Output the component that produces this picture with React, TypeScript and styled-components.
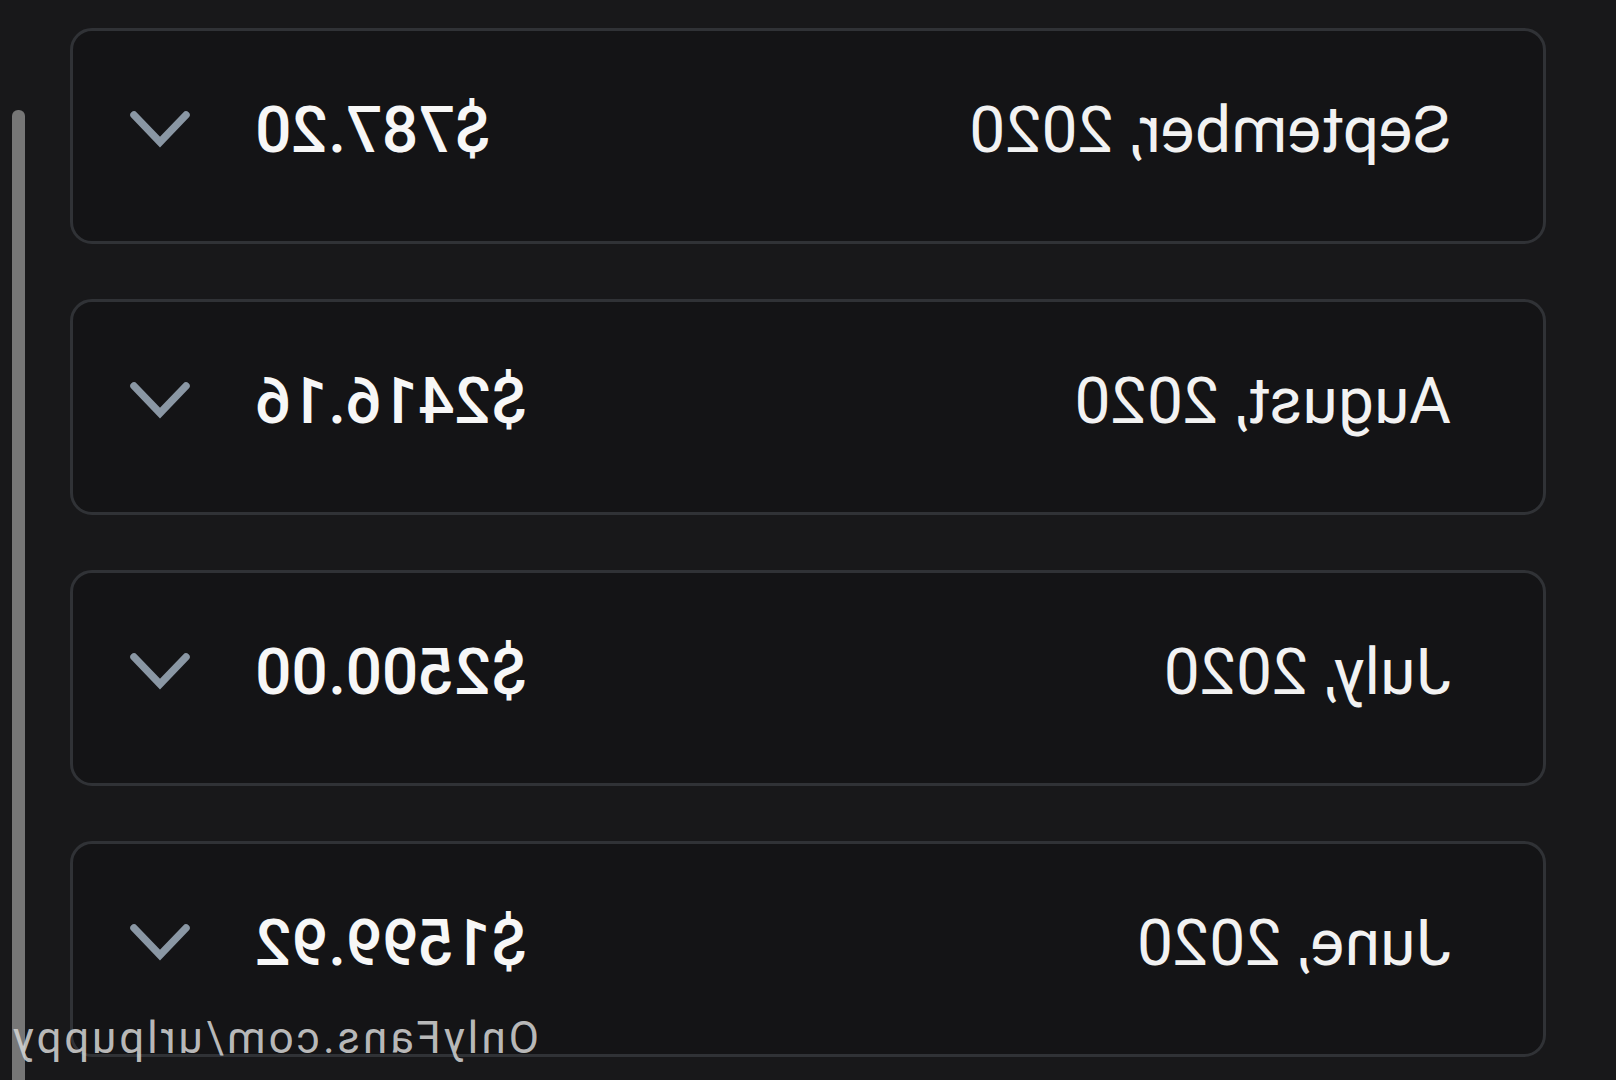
import React from "react";
import styled, { createGlobalStyle } from "styled-components";

const Global = createGlobalStyle`
  html, body {
    margin: 0;
    padding: 0;
    background: #18181a;
    overflow: hidden;
  }
  * { box-sizing: border-box; }
`;

const Page = styled.div`
  position: relative;
  width: 1616px;
  height: 1080px;
  display: flex;
  flex-direction: row;
  padding-right: 12px;
  background: #18181a;
  font-family: Roboto, "Liberation Sans", sans-serif;
  transform: scaleX(-1);
  overflow: hidden;
`;

const List = styled.div`
  flex: 1;
  display: flex;
  flex-direction: column;
  gap: 55px;
  padding: 28px 45px 0 70px;
`;

const Card = styled.div`
  flex: none;
  height: 216px;
  display: flex;
  align-items: center;
  padding: 0 56px 12px 92px;
  background: #141416;
  border: 3px solid #303236;
  border-radius: 22px;
`;

const Month = styled.div`
  flex: 1;
  color: #f2f2f2;
  font-size: 64px;
  font-weight: 400;
  letter-spacing: 0.2px;
`;

const Amount = styled.div`
  color: #f7f7f7;
  font-size: 64px;
  font-weight: 500;
  margin-right: 64px;
`;

const Chevron = styled.svg`
  width: 62px;
  height: 40px;
  display: block;
`;

const ScrollThumb = styled.div`
  width: 13px;
  margin-top: 110px;
  background: #767676;
  border-radius: 6px 6px 0 0;
`;

const Watermark = styled.div`
  position: absolute;
  right: 10px;
  bottom: 16px;
  color: rgba(215, 215, 215, 0.85);
  font-size: 44px;
  font-weight: 400;
  letter-spacing: 3px;
  white-space: nowrap;
`;

const rows = [
  { month: "September, 2020", amount: "$787.20" },
  { month: "August, 2020", amount: "$2416.16" },
  { month: "July, 2020", amount: "$2500.00" },
  { month: "June, 2020", amount: "$1599.92" },
];

export default function App() {
  return (
    <>
      <Global />
      <Page>
        <List>
          {rows.map((r) => (
            <Card key={r.month}>
              <Month>{r.month}</Month>
              <Amount>{r.amount}</Amount>
              <Chevron viewBox="0 0 62 40" fill="none">
                <polyline
                  points="5,5 31,32 57,5"
                  stroke="#8a97a4"
                  strokeWidth="7.5"
                  strokeLinecap="round"
                  strokeLinejoin="miter"
                />
              </Chevron>
            </Card>
          ))}
        </List>
        <ScrollThumb />
        <Watermark>OnlyFans.com/urlpuppy</Watermark>
      </Page>
    </>
  );
}
